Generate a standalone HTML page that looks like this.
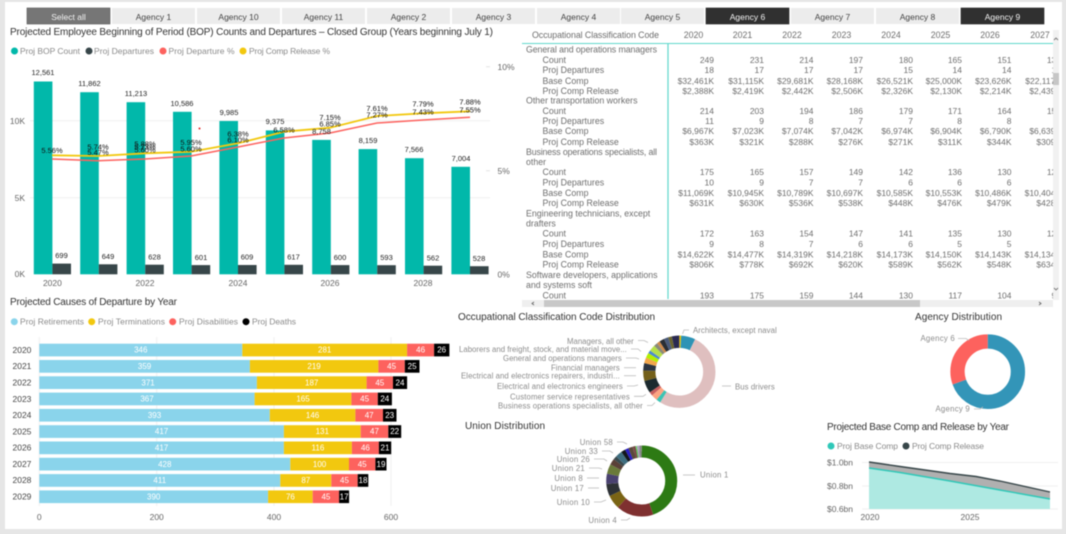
<!DOCTYPE html>
<html><head><meta charset="utf-8"><style>
html,body{margin:0;padding:0;background:#e6e6e6;width:1066px;height:534px;overflow:hidden}
svg{display:block;position:absolute;left:0;top:0;filter:blur(.5px);font-family:"Liberation Sans",sans-serif}
.t{font-size:10px;fill:#333}
.l{font-size:8.5px;fill:#8a8a8a}
.a{font-size:8.5px;fill:#666}
.d{font-size:7.5px;fill:#222;text-anchor:middle}
.p{font-size:7.5px;fill:#111;text-anchor:middle}
.s{font-size:8.5px;text-anchor:middle;fill:#444}
.b{font-size:8px;fill:#fff;text-anchor:middle}
.c{font-size:8.8px;fill:#6e6e6e}
.n{font-size:8.5px;fill:#6e6e6e;text-anchor:end}
.o{font-size:7.8px;fill:#8c8c8c;letter-spacing:.25px}
.e{text-anchor:end}
.ld{stroke:#bbb;stroke-width:.8;fill:none}
</style></head><body>
<svg width="1066" height="534" viewBox="0 0 1066 534" xmlns="http://www.w3.org/2000/svg">
<defs><clipPath id="tc"><rect x="522" y="26" width="531" height="274"/></clipPath></defs>
<rect x="5" y="2" width="1057" height="527" fill="#fff"/>

<!-- slicer -->
<g>
<rect x="27" y="8" width="83" height="16" fill="#767676" stroke="#555" stroke-width=".6"/>
<rect x="112" y="8" width="83" height="16" fill="#ececec"/>
<rect x="197" y="8" width="83" height="16" fill="#ececec"/>
<rect x="282" y="8" width="83" height="16" fill="#ececec"/>
<rect x="367" y="8" width="83" height="16" fill="#ececec"/>
<rect x="452" y="8" width="83" height="16" fill="#ececec"/>
<rect x="537" y="8" width="83" height="16" fill="#ececec"/>
<rect x="621" y="8" width="83" height="16" fill="#ececec"/>
<rect x="706" y="8" width="83" height="16" fill="#303030" stroke="#222" stroke-width=".6"/>
<rect x="791" y="8" width="83" height="16" fill="#ececec"/>
<rect x="876" y="8" width="83" height="16" fill="#ececec"/>
<rect x="961" y="8" width="83" height="16" fill="#303030" stroke="#222" stroke-width=".6"/>
<text class="s" x="68.5" y="20" style="fill:#f2f2f2">Select all</text>
<text class="s" x="153.5" y="20">Agency 1</text>
<text class="s" x="238.5" y="20">Agency 10</text>
<text class="s" x="323.5" y="20">Agency 11</text>
<text class="s" x="408.5" y="20">Agency 2</text>
<text class="s" x="493.5" y="20">Agency 3</text>
<text class="s" x="578.5" y="20">Agency 4</text>
<text class="s" x="662.5" y="20">Agency 5</text>
<text class="s" x="747.5" y="20" style="fill:#f2f2f2">Agency 6</text>
<text class="s" x="832.5" y="20">Agency 7</text>
<text class="s" x="917.5" y="20">Agency 8</text>
<text class="s" x="1002.5" y="20" style="fill:#f2f2f2">Agency 9</text>
</g>

<!-- chart 1 -->
<text class="t" x="10" y="35" textLength="483" lengthAdjust="spacing">Projected Employee Beginning of Period (BOP) Counts and Departures – Closed Group (Years beginning July 1)</text>
<circle cx="14.5" cy="51" r="3.5" fill="#01b8aa"/><text class="l" x="20" y="54" textLength="60">Proj BOP Count</text>
<circle cx="89" cy="51" r="3.5" fill="#374649"/><text class="l" x="94" y="54" textLength="60">Proj Departures</text>
<circle cx="163" cy="51" r="3.5" fill="#fd625e"/><text class="l" x="168.5" y="54" textLength="66">Proj Departure %</text>
<circle cx="243" cy="51" r="3.5" fill="#f2c80f"/><text class="l" x="249" y="54" textLength="81">Proj Comp Release %</text>

<path d="M30 120.7H490M30 197.7H490" stroke="#efefef" stroke-width="1"/>
<path d="M486 66.7h4M486 170.7h4" stroke="#e4e4e4"/>
<text class="a e" x="25" y="124">10K</text>
<text class="a e" x="25" y="201">5K</text>
<text class="a e" x="25" y="277">0K</text>
<text class="a" x="497.5" y="70">10%</text>
<text class="a" x="497.5" y="174">5%</text>
<text class="a" x="497.5" y="277.5">0%</text>

<g fill="#01b8aa">
<rect x="33.8" y="81.5" width="18.6" height="192.8"/>
<rect x="80.2" y="92.2" width="18.6" height="182.1"/>
<rect x="126.6" y="102.2" width="18.6" height="172.1"/>
<rect x="173" y="111.8" width="18.6" height="162.5"/>
<rect x="219.4" y="121" width="18.6" height="153.3"/>
<rect x="265.8" y="130.4" width="18.6" height="143.9"/>
<rect x="312.2" y="139.9" width="18.6" height="134.4"/>
<rect x="358.6" y="149.1" width="18.6" height="125.2"/>
<rect x="405" y="158.2" width="18.6" height="116.1"/>
<rect x="451.4" y="166.8" width="18.6" height="107.5"/>
</g>
<g fill="#374649">
<rect x="52.4" y="263.6" width="18.6" height="10.7"/>
<rect x="98.8" y="264.3" width="18.6" height="10"/>
<rect x="145.2" y="264.7" width="18.6" height="9.6"/>
<rect x="191.6" y="265.1" width="18.6" height="9.2"/>
<rect x="238" y="265" width="18.6" height="9.3"/>
<rect x="284.4" y="264.8" width="18.6" height="9.5"/>
<rect x="330.8" y="265.1" width="18.6" height="9.2"/>
<rect x="377.2" y="265.2" width="18.6" height="9.1"/>
<rect x="423.6" y="265.7" width="18.6" height="8.6"/>
<rect x="470" y="266.2" width="18.6" height="8.1"/>
</g>
<polyline points="52,159 98,160.7 145,159 191,156 238,147 284,138 330,133 377,123 423,120 470,117.3" fill="none" stroke="#fd625e" stroke-width="1.5"/>
<polyline points="52,155.3 98,156 145,153.3 191,151.7 238,143.3 284,131.7 330,127.7 377,116 423,113.3 470,111.3" fill="none" stroke="#f2c80f" stroke-width="1.8"/>
<circle cx="199.5" cy="128.5" r="1" fill="#e02020"/>

<text class="d" x="43" y="75">12,561</text>
<text class="d" x="89.5" y="86">11,862</text>
<text class="d" x="136" y="96">11,213</text>
<text class="d" x="182" y="106">10,586</text>
<text class="d" x="229" y="115">9,985</text>
<text class="d" x="275" y="124">9,375</text>
<text class="d" x="321.5" y="134">8,758</text>
<text class="d" x="368" y="143">8,159</text>
<text class="d" x="414" y="152">7,566</text>
<text class="d" x="461" y="161">7,004</text>

<text class="d" x="61.5" y="258">699</text>
<text class="d" x="108" y="259">649</text>
<text class="d" x="154.5" y="259.5">628</text>
<text class="d" x="201" y="260">601</text>
<text class="d" x="247" y="259.5">609</text>
<text class="d" x="293.5" y="259.5">617</text>
<text class="d" x="340" y="260">600</text>
<text class="d" x="386.5" y="260">593</text>
<text class="d" x="433" y="260.5">562</text>
<text class="d" x="479" y="261">528</text>

<text class="p" x="52" y="153">5.56%</text>
<text class="p" x="98" y="149.5">5.74%</text><text class="p" x="98" y="155">5.47%</text>
<text class="p" x="145" y="146.5">5.88%</text><text class="p" x="145" y="149.5">5.73%</text><text class="p" x="145" y="152.5">5.60%</text>
<text class="p" x="191" y="145">5.95%</text><text class="p" x="191" y="151.5">5.60%</text>
<text class="p" x="238" y="136.5">6.38%</text><text class="p" x="238" y="142.5">6.10%</text>
<text class="p" x="284" y="132.5">6.58%</text>
<text class="p" x="330" y="120">7.15%</text><text class="p" x="330" y="126.5">6.85%</text>
<text class="p" x="377" y="111">7.61%</text><text class="p" x="377" y="117.5">7.27%</text>
<text class="p" x="423" y="106.5">7.79%</text><text class="p" x="423" y="114.5">7.43%</text>
<text class="p" x="470" y="104.5">7.88%</text><text class="p" x="470" y="112.5">7.55%</text>

<g class="a" text-anchor="middle" style="fill:#666">
<text x="52.4" y="286">2020</text><text x="145" y="286">2022</text><text x="238" y="286">2024</text><text x="330" y="286">2026</text><text x="423" y="286">2028</text>
</g>

<!-- table -->
<text class="c" x="532" y="38" textLength="127">Occupational Classification Code</text>
<g class="c" text-anchor="middle">
<text x="693.5" y="38">2020</text><text x="742.5" y="38">2021</text><text x="792" y="38">2022</text><text x="841.5" y="38">2023</text><text x="891" y="38">2024</text><text x="940.5" y="38">2025</text><text x="990" y="38">2026</text><text x="1040" y="38">2027</text>
</g>
<path d="M522 43.5H1053" stroke="#5fd8cc" stroke-width="1"/>
<path d="M668 43.5V299" stroke="#5fd8cc" stroke-width="1.2"/>
<g class="c">
<text x="526" y="52.5" textLength="131">General and operations managers</text>
<text x="542.5" y="63">Count</text><text x="542.5" y="73">Proj Departures</text><text x="542.5" y="84">Base Comp</text><text x="542.5" y="94">Proj Comp Release</text>
<text x="526" y="103.5">Other transportation workers</text>
<text x="542.5" y="114">Count</text><text x="542.5" y="124">Proj Departures</text><text x="542.5" y="134">Base Comp</text><text x="542.5" y="145">Proj Comp Release</text>
<text x="526" y="155" textLength="131">Business operations specialists, all</text><text x="526" y="165">other</text>
<text x="542.5" y="175">Count</text><text x="542.5" y="185.5">Proj Departures</text><text x="542.5" y="196">Base Comp</text><text x="542.5" y="206">Proj Comp Release</text>
<text x="526" y="216.5">Engineering technicians, except</text><text x="526" y="226.5">drafters</text>
<text x="542.5" y="236.5">Count</text><text x="542.5" y="247">Proj Departures</text><text x="542.5" y="257.5">Base Comp</text><text x="542.5" y="267.5">Proj Comp Release</text>
<text x="526" y="278">Software developers, applications</text><text x="526" y="288">and systems soft</text>
<text x="542.5" y="298.5">Count</text>
</g>
<g clip-path="url(#tc)" class="n">
<text y="63"><tspan x="714">249</tspan><tspan x="764">231</tspan><tspan x="813.5">214</tspan><tspan x="863">197</tspan><tspan x="913">180</tspan><tspan x="962">165</tspan><tspan x="1011.5">151</tspan><tspan x="1061">138</tspan></text>
<text y="73"><tspan x="714">18</tspan><tspan x="764">17</tspan><tspan x="813.5">17</tspan><tspan x="863">17</tspan><tspan x="913">15</tspan><tspan x="962">14</tspan><tspan x="1011.5">14</tspan><tspan x="1061">13</tspan></text>
<text y="84"><tspan x="714">$32,461K</tspan><tspan x="764">$31,115K</tspan><tspan x="813.5">$29,681K</tspan><tspan x="863">$28,168K</tspan><tspan x="913">$26,521K</tspan><tspan x="962">$25,000K</tspan><tspan x="1011.5">$23,626K</tspan><tspan x="1061">$22,117K</tspan></text>
<text y="94"><tspan x="714">$2,388K</tspan><tspan x="764">$2,419K</tspan><tspan x="813.5">$2,442K</tspan><tspan x="863">$2,506K</tspan><tspan x="913">$2,326K</tspan><tspan x="962">$2,130K</tspan><tspan x="1011.5">$2,214K</tspan><tspan x="1061">$2,439K</tspan></text>
<text y="114"><tspan x="714">214</tspan><tspan x="764">203</tspan><tspan x="813.5">194</tspan><tspan x="863">186</tspan><tspan x="913">179</tspan><tspan x="962">171</tspan><tspan x="1011.5">164</tspan><tspan x="1061">157</tspan></text>
<text y="124"><tspan x="714">11</tspan><tspan x="764">9</tspan><tspan x="813.5">8</tspan><tspan x="863">7</tspan><tspan x="913">7</tspan><tspan x="962">8</tspan><tspan x="1011.5">8</tspan><tspan x="1061">8</tspan></text>
<text y="134"><tspan x="714">$6,967K</tspan><tspan x="764">$7,023K</tspan><tspan x="813.5">$7,074K</tspan><tspan x="863">$7,042K</tspan><tspan x="913">$6,974K</tspan><tspan x="962">$6,904K</tspan><tspan x="1011.5">$6,790K</tspan><tspan x="1061">$6,639K</tspan></text>
<text y="145"><tspan x="714">$363K</tspan><tspan x="764">$321K</tspan><tspan x="813.5">$288K</tspan><tspan x="863">$276K</tspan><tspan x="913">$271K</tspan><tspan x="962">$311K</tspan><tspan x="1011.5">$344K</tspan><tspan x="1061">$309K</tspan></text>
<text y="175"><tspan x="714">175</tspan><tspan x="764">165</tspan><tspan x="813.5">157</tspan><tspan x="863">149</tspan><tspan x="913">142</tspan><tspan x="962">136</tspan><tspan x="1011.5">130</tspan><tspan x="1061">124</tspan></text>
<text y="185.5"><tspan x="714">10</tspan><tspan x="764">9</tspan><tspan x="813.5">7</tspan><tspan x="863">7</tspan><tspan x="913">6</tspan><tspan x="962">6</tspan><tspan x="1011.5">6</tspan><tspan x="1061">6</tspan></text>
<text y="196"><tspan x="714">$11,069K</tspan><tspan x="764">$10,945K</tspan><tspan x="813.5">$10,789K</tspan><tspan x="863">$10,697K</tspan><tspan x="913">$10,585K</tspan><tspan x="962">$10,553K</tspan><tspan x="1011.5">$10,486K</tspan><tspan x="1061">$10,404K</tspan></text>
<text y="206"><tspan x="714">$631K</tspan><tspan x="764">$630K</tspan><tspan x="813.5">$536K</tspan><tspan x="863">$538K</tspan><tspan x="913">$448K</tspan><tspan x="962">$476K</tspan><tspan x="1011.5">$479K</tspan><tspan x="1061">$428K</tspan></text>
<text y="236.5"><tspan x="714">172</tspan><tspan x="764">163</tspan><tspan x="813.5">154</tspan><tspan x="863">147</tspan><tspan x="913">141</tspan><tspan x="962">135</tspan><tspan x="1011.5">130</tspan><tspan x="1061">125</tspan></text>
<text y="247"><tspan x="714">9</tspan><tspan x="764">8</tspan><tspan x="813.5">7</tspan><tspan x="863">6</tspan><tspan x="913">6</tspan><tspan x="962">5</tspan><tspan x="1011.5">5</tspan><tspan x="1061">5</tspan></text>
<text y="257.5"><tspan x="714">$14,622K</tspan><tspan x="764">$14,477K</tspan><tspan x="813.5">$14,319K</tspan><tspan x="863">$14,218K</tspan><tspan x="913">$14,173K</tspan><tspan x="962">$14,150K</tspan><tspan x="1011.5">$14,143K</tspan><tspan x="1061">$14,134K</tspan></text>
<text y="267.5"><tspan x="714">$806K</tspan><tspan x="764">$778K</tspan><tspan x="813.5">$692K</tspan><tspan x="863">$620K</tspan><tspan x="913">$589K</tspan><tspan x="962">$562K</tspan><tspan x="1011.5">$548K</tspan><tspan x="1061">$634K</tspan></text>
<text y="298.5"><tspan x="714">193</tspan><tspan x="764">175</tspan><tspan x="813.5">159</tspan><tspan x="863">144</tspan><tspan x="913">130</tspan><tspan x="962">117</tspan><tspan x="1011.5">104</tspan><tspan x="1061">93</tspan></text>
</g>
<!-- scrollbars -->
<rect x="1053" y="30" width="6" height="270" fill="#f1f1f1"/>
<rect x="1053" y="73" width="6" height="12" fill="#c6c6c6"/>
<path d="M1054 40l2-2 2 2M1054 288l2 2 2-2" fill="none" stroke="#777" stroke-width=".9"/>
<rect x="522" y="300" width="531" height="7" fill="#efefef"/>
<rect x="544" y="300" width="376" height="7" fill="#c8c8c8"/>
<path d="M534 302l-2 1.5 2 1.5M1039 302l2 1.5-2 1.5" fill="none" stroke="#666" stroke-width=".9"/>

<!-- causes -->
<text class="t" x="10" y="305" textLength="167">Projected Causes of Departure by Year</text>
<circle cx="14.3" cy="321.7" r="3.5" fill="#8ad4eb"/><text class="l" x="20" y="324.7" textLength="64">Proj Retirements</text>
<circle cx="91.7" cy="321.7" r="3.5" fill="#f2c80f"/><text class="l" x="98" y="324.7" textLength="67">Proj Terminations</text>
<circle cx="172.7" cy="321.7" r="3.5" fill="#fd625e"/><text class="l" x="179" y="324.7" textLength="59">Proj Disabilities</text>
<circle cx="246" cy="321.7" r="3.5" fill="#000"/><text class="l" x="252" y="324.7" textLength="44">Proj Deaths</text>
<path d="M39.3 337V506M156.7 337V506M274 337V506M391 337V506" stroke="#f0f0f0"/>
<g>
<rect x="39.3" y="343.7" width="203" height="12.7" fill="#8ad4eb"/><rect x="242.3" y="343.7" width="164.8" height="12.7" fill="#f2c80f"/><rect x="407.1" y="343.7" width="27" height="12.7" fill="#fd625e"/><rect x="434.1" y="343.7" width="15.3" height="12.7" fill="#000"/>
<rect x="39.3" y="360" width="210.6" height="12.7" fill="#8ad4eb"/><rect x="249.9" y="360" width="128.5" height="12.7" fill="#f2c80f"/><rect x="378.4" y="360" width="26.4" height="12.7" fill="#fd625e"/><rect x="404.8" y="360" width="14.7" height="12.7" fill="#000"/>
<rect x="39.3" y="376.3" width="217.6" height="12.7" fill="#8ad4eb"/><rect x="256.9" y="376.3" width="109.7" height="12.7" fill="#f2c80f"/><rect x="366.6" y="376.3" width="26.4" height="12.7" fill="#fd625e"/><rect x="393" y="376.3" width="14.1" height="12.7" fill="#000"/>
<rect x="39.3" y="392.6" width="215.3" height="12.7" fill="#8ad4eb"/><rect x="254.6" y="392.6" width="96.8" height="12.7" fill="#f2c80f"/><rect x="351.4" y="392.6" width="26.4" height="12.7" fill="#fd625e"/><rect x="377.8" y="392.6" width="14.1" height="12.7" fill="#000"/>
<rect x="39.3" y="408.9" width="230.5" height="12.7" fill="#8ad4eb"/><rect x="269.8" y="408.9" width="85.6" height="12.7" fill="#f2c80f"/><rect x="355.4" y="408.9" width="27.6" height="12.7" fill="#fd625e"/><rect x="383" y="408.9" width="13.5" height="12.7" fill="#000"/>
<rect x="39.3" y="425.2" width="244.6" height="12.7" fill="#8ad4eb"/><rect x="283.9" y="425.2" width="76.8" height="12.7" fill="#f2c80f"/><rect x="360.7" y="425.2" width="27.6" height="12.7" fill="#fd625e"/><rect x="388.3" y="425.2" width="12.9" height="12.7" fill="#000"/>
<rect x="39.3" y="441.5" width="244.6" height="12.7" fill="#8ad4eb"/><rect x="283.9" y="441.5" width="68" height="12.7" fill="#f2c80f"/><rect x="351.9" y="441.5" width="27" height="12.7" fill="#fd625e"/><rect x="378.9" y="441.5" width="12.3" height="12.7" fill="#000"/>
<rect x="39.3" y="457.8" width="251" height="12.7" fill="#8ad4eb"/><rect x="290.3" y="457.8" width="58.7" height="12.7" fill="#f2c80f"/><rect x="349" y="457.8" width="26.4" height="12.7" fill="#fd625e"/><rect x="375.4" y="457.8" width="11.1" height="12.7" fill="#000"/>
<rect x="39.3" y="474.1" width="241" height="12.7" fill="#8ad4eb"/><rect x="280.3" y="474.1" width="51" height="12.7" fill="#f2c80f"/><rect x="331.3" y="474.1" width="26.4" height="12.7" fill="#fd625e"/><rect x="357.7" y="474.1" width="10.6" height="12.7" fill="#000"/>
<rect x="39.3" y="490.4" width="228.8" height="12.7" fill="#8ad4eb"/><rect x="268.1" y="490.4" width="44.6" height="12.7" fill="#f2c80f"/><rect x="312.7" y="490.4" width="26.4" height="12.7" fill="#fd625e"/><rect x="339.1" y="490.4" width="10" height="12.7" fill="#000"/>
</g>
<g class="a" style="fill:#444">
<text x="12.5" y="353">2020</text><text x="12.5" y="369">2021</text><text x="12.5" y="385.5">2022</text><text x="12.5" y="402">2023</text><text x="12.5" y="418">2024</text><text x="12.5" y="434.5">2025</text><text x="12.5" y="450.5">2026</text><text x="12.5" y="467">2027</text><text x="12.5" y="483">2028</text><text x="12.5" y="499.5">2029</text>
</g>
<g class="b">
<text x="140.8" y="352.7">346</text><text x="324.7" y="352.7">281</text><text x="420.6" y="352.7">46</text><text x="441.7" y="352.7">26</text>
<text x="144.6" y="369">359</text><text x="314.1" y="369">219</text><text x="391.6" y="369">45</text><text x="412.1" y="369">25</text>
<text x="148.1" y="385.3">371</text><text x="311.7" y="385.3">187</text><text x="379.8" y="385.3">45</text><text x="400" y="385.3">24</text>
<text x="147" y="401.6">367</text><text x="303" y="401.6">165</text><text x="364.6" y="401.6">45</text><text x="384.8" y="401.6">24</text>
<text x="154.5" y="417.9">393</text><text x="312.6" y="417.9">146</text><text x="369.2" y="417.9">47</text><text x="389.7" y="417.9">23</text>
<text x="161.6" y="434.2">417</text><text x="322.3" y="434.2">131</text><text x="374.5" y="434.2">47</text><text x="394.7" y="434.2">22</text>
<text x="161.6" y="450.5">417</text><text x="317.9" y="450.5">116</text><text x="365.4" y="450.5">46</text><text x="385" y="450.5">21</text>
<text x="164.8" y="466.8">428</text><text x="319.6" y="466.8">100</text><text x="362.2" y="466.8">45</text><text x="381" y="466.8">19</text>
<text x="159.8" y="483.1">411</text><text x="305.8" y="483.1">87</text><text x="344.5" y="483.1">45</text><text x="363" y="483.1">18</text>
<text x="153.7" y="499.4">390</text><text x="290.4" y="499.4">76</text><text x="325.9" y="499.4">45</text><text x="344.1" y="499.4">17</text>
</g>
<g class="a" text-anchor="middle" style="fill:#666">
<text x="39.3" y="520">0</text><text x="156.7" y="520">200</text><text x="274" y="520">400</text><text x="391" y="520">600</text>
</g>

<!-- occupational donut -->
<text class="t" x="458" y="320" textLength="197">Occupational Classification Code Distribution</text>
<g fill="none" stroke-width="12.3" transform="rotate(-90 679.3 371.7)">
<circle cx="679.3" cy="371.7" r="30" pathLength="360" stroke="#e8c400" stroke-dasharray="3 357"/>
<circle cx="679.3" cy="371.7" r="30" pathLength="360" stroke="#2e93b5" stroke-dasharray="23 337" stroke-dashoffset="-3"/>
<circle cx="679.3" cy="371.7" r="30" pathLength="360" stroke="#dfbfbf" stroke-dasharray="186 174" stroke-dashoffset="-26"/>
<circle cx="679.3" cy="371.7" r="30" pathLength="360" stroke="#3cc4b4" stroke-dasharray="7 353" stroke-dashoffset="-212"/>
<circle cx="679.3" cy="371.7" r="30" pathLength="360" stroke="#fda582" stroke-dasharray="10 350" stroke-dashoffset="-219"/>
<circle cx="679.3" cy="371.7" r="30" pathLength="360" stroke="#c9605f" stroke-dasharray="6 354" stroke-dashoffset="-229"/>
<circle cx="679.3" cy="371.7" r="30" pathLength="360" stroke="#1c2a2e" stroke-dasharray="20 340" stroke-dashoffset="-235"/>
<circle cx="679.3" cy="371.7" r="30" pathLength="360" stroke="#74601a" stroke-dasharray="17 343" stroke-dashoffset="-255"/>
<circle cx="679.3" cy="371.7" r="30" pathLength="360" stroke="#2c3440" stroke-dasharray="12 348" stroke-dashoffset="-272"/>
<circle cx="679.3" cy="371.7" r="30" pathLength="360" stroke="#f3a64b" stroke-dasharray="9 351" stroke-dashoffset="-284"/>
<circle cx="679.3" cy="371.7" r="30" pathLength="360" stroke="#b4f000" stroke-dasharray="8 352" stroke-dashoffset="-293"/>
<circle cx="679.3" cy="371.7" r="30" pathLength="360" stroke="#4a8ad0" stroke-dasharray="5 355" stroke-dashoffset="-301"/>
<circle cx="679.3" cy="371.7" r="30" pathLength="360" stroke="#b6e04a" stroke-dasharray="10 350" stroke-dashoffset="-306"/>
<circle cx="679.3" cy="371.7" r="30" pathLength="360" stroke="#8a8a7a" stroke-dasharray="6 354" stroke-dashoffset="-316"/>
<circle cx="679.3" cy="371.7" r="30" pathLength="360" stroke="#d08a4a" stroke-dasharray="5 355" stroke-dashoffset="-322"/>
<circle cx="679.3" cy="371.7" r="30" pathLength="360" stroke="#2a2e34" stroke-dasharray="8 352" stroke-dashoffset="-327"/>
<circle cx="679.3" cy="371.7" r="30" pathLength="360" stroke="#4a5a7a" stroke-dasharray="7 353" stroke-dashoffset="-335"/>
<circle cx="679.3" cy="371.7" r="30" pathLength="360" stroke="#6a6430" stroke-dasharray="6 354" stroke-dashoffset="-342"/>
<circle cx="679.3" cy="371.7" r="30" pathLength="360" stroke="#2a2a50" stroke-dasharray="12 348" stroke-dashoffset="-348"/>
</g>
<g class="o">
<text x="693" y="333" textLength="84">Architects, except naval</text>
<text class="e" x="634" y="344" textLength="67">Managers, all other</text>
<text class="e" x="627" y="352" textLength="168">Laborers and freight, stock, and material move...</text>
<text class="e" x="622" y="361" textLength="119">General and operations managers</text>
<text class="e" x="620" y="370.7" textLength="69">Financial managers</text>
<text class="e" x="620" y="378.7" textLength="159">Electrical and electronics repairers, industri...</text>
<text class="e" x="623" y="389" textLength="126">Electrical and electronics engineers</text>
<text class="e" x="630" y="399.3" textLength="120">Customer service representatives</text>
<text class="e" x="643" y="408.7" textLength="145">Business operations specialists, all other</text>
<text x="735" y="389.7" textLength="40">Bus drivers</text>
</g>
<g class="ld">
<path d="M689 330h-5l-1.5 4"/><path d="M638 340.5h6l4 2"/><path d="M631 349h7l3 2.5"/><path d="M626 358h10l3 1"/><path d="M624 367.7h12"/><path d="M624 375.7h12"/><path d="M627 386h7l4-1"/><path d="M634 396.3h9l3-2"/><path d="M647 405.5h5l3-3"/><path d="M722 386h9"/>
</g>

<!-- union donut -->
<text class="t" x="465" y="429" textLength="80">Union Distribution</text>
<g fill="none" stroke-width="12" transform="rotate(-90 641.7 481)">
<circle cx="641.7" cy="481" r="29.5" pathLength="360" stroke="#2d7a14" stroke-dasharray="161 199"/>
<circle cx="641.7" cy="481" r="29.5" pathLength="360" stroke="#7f3030" stroke-dasharray="61 299" stroke-dashoffset="-161"/>
<circle cx="641.7" cy="481" r="29.5" pathLength="360" stroke="#7a6414" stroke-dasharray="23 337" stroke-dashoffset="-222"/>
<circle cx="641.7" cy="481" r="29.5" pathLength="360" stroke="#2e3236" stroke-dasharray="20 340" stroke-dashoffset="-245"/>
<circle cx="641.7" cy="481" r="29.5" pathLength="360" stroke="#4a4270" stroke-dasharray="17 343" stroke-dashoffset="-265"/>
<circle cx="641.7" cy="481" r="29.5" pathLength="360" stroke="#6a7a3a" stroke-dasharray="16 344" stroke-dashoffset="-282"/>
<circle cx="641.7" cy="481" r="29.5" pathLength="360" stroke="#5a4038" stroke-dasharray="10 350" stroke-dashoffset="-298"/>
<circle cx="641.7" cy="481" r="29.5" pathLength="360" stroke="#3a4a4e" stroke-dasharray="6 354" stroke-dashoffset="-308"/>
<circle cx="641.7" cy="481" r="29.5" pathLength="360" stroke="#3f6e80" stroke-dasharray="11 349" stroke-dashoffset="-314"/>
<circle cx="641.7" cy="481" r="29.5" pathLength="360" stroke="#12161c" stroke-dasharray="7 353" stroke-dashoffset="-325"/>
<circle cx="641.7" cy="481" r="29.5" pathLength="360" stroke="#2a20c0" stroke-dasharray="6 354" stroke-dashoffset="-332"/>
<circle cx="641.7" cy="481" r="29.5" pathLength="360" stroke="#5a4a3a" stroke-dasharray="7 353" stroke-dashoffset="-338"/>
<circle cx="641.7" cy="481" r="29.5" pathLength="360" stroke="#7a4a4a" stroke-dasharray="5 355" stroke-dashoffset="-345"/>
<circle cx="641.7" cy="481" r="29.5" pathLength="360" stroke="#5fe05f" stroke-dasharray="2 358" stroke-dashoffset="-350"/>
<circle cx="641.7" cy="481" r="29.5" pathLength="360" stroke="#b0a0c0" stroke-dasharray="4 356" stroke-dashoffset="-352"/>
<circle cx="641.7" cy="481" r="29.5" pathLength="360" stroke="#888" stroke-dasharray="4 356" stroke-dashoffset="-356"/>
</g>
<g class="o">
<text class="e" x="613" y="445">Union 58</text><text class="e" x="598" y="454">Union 33</text><text class="e" x="590" y="462">Union 26</text><text class="e" x="585" y="471">Union 21</text><text class="e" x="583" y="481">Union 8</text><text class="e" x="584" y="491">Union 17</text><text class="e" x="590" y="505">Union 10</text><text class="e" x="617" y="523">Union 4</text><text x="700" y="477.7">Union 1</text>
</g>
<g class="ld">
<path d="M617 442h6l4 2"/><path d="M602 451h8l3 2"/><path d="M594 459h10l3 2"/><path d="M589 468h10l3 1"/><path d="M587 478h12"/><path d="M588 488h11"/><path d="M594 502h7l5-2"/><path d="M621 520h6l3-2"/><path d="M683 475h12"/>
</g>

<!-- agency donut -->
<text class="t" x="915" y="320" textLength="87">Agency Distribution</text>
<g fill="none" stroke-width="14.3" transform="rotate(-90 987.7 371.7)">
<circle cx="987.7" cy="371.7" r="30.2" pathLength="360" stroke="#3395b8" stroke-dasharray="250 110"/>
<circle cx="987.7" cy="371.7" r="30.2" pathLength="360" stroke="#fd625e" stroke-dasharray="110 250" stroke-dashoffset="-250"/>
</g>
<g class="o">
<text class="e" x="955" y="341">Agency 6</text><text class="e" x="970" y="411.7">Agency 9</text>
</g>
<g class="ld"><path d="M958 338.5h8l3 2"/><path d="M974 409h6l3-2"/></g>

<!-- area -->
<text class="t" x="827" y="430" textLength="182">Projected Base Comp and Release by Year</text>
<circle cx="831" cy="446" r="3.5" fill="#2fc8b8"/><text class="l" x="837" y="449" textLength="61">Proj Base Comp</text>
<circle cx="906" cy="446" r="3.5" fill="#374649"/><text class="l" x="912" y="449" textLength="72">Proj Comp Release</text>
<path d="M862 462.5H1058M862 486H1058M862 509H1058" stroke="#f0f0f0"/>
<text class="a" x="827" y="465.5">$1.0bn</text><text class="a" x="827" y="489">$0.8bn</text><text class="a" x="827" y="512">$0.6bn</text>
<path d="M869 468 L900 472.5 L950 481 L1000 490 L1050 499 V509 H869Z" fill="#aee9e2"/>
<path d="M869 462 L900 466.5 L950 473.5 L976 476.5 L1000 481 L1050 492 V499 L1000 490 L950 481 L900 472.5 L869 468Z" fill="#b0b0b0"/>
<path d="M869 468 L900 472.5 L950 481 L1000 490 L1050 499" fill="none" stroke="#2fc8b8" stroke-width="1.4"/>
<path d="M869 462 L900 466.5 L950 473.5 L976 476.5 L1000 481 L1050 492" fill="none" stroke="#374649" stroke-width="1.4"/>
<g class="a" text-anchor="middle" style="fill:#666"><text x="870" y="520">2020</text><text x="970" y="520">2025</text></g>
</svg>
</body></html>
